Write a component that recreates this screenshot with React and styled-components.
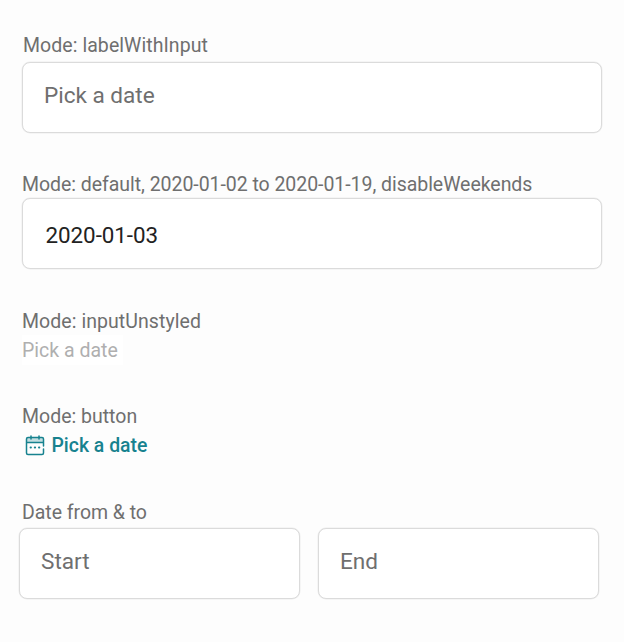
import React from "react";
import styled, { createGlobalStyle } from "styled-components";

const Global = createGlobalStyle`
  *{box-sizing:border-box}
  body{margin:0;background:#fdfdfd;font-family:Roboto,sans-serif;color:#6f6f6f}
`;
const Page = styled.main`
  width:624px;height:642px;padding:32px 22px 0;display:flex;flex-direction:column;overflow:hidden;
`;
const Section = styled.section`
  display:flex;flex-direction:column;flex:none;height:${p => p.$h}px;
`;
const Label = styled.label`
  height:${p => p.$h || 28}px;line-height:${p => p.$line || 30}px;font-size:19.5px;letter-spacing:${p => p.$ls || 0}px;white-space:nowrap;
  padding-left:${p => p.$indent || 0}px;
`;
const Field = styled.div`
  height:71px;width:${p => p.$w || 580}px;border:1px solid #dbdbdb;border-radius:8px;background:#fff;
  box-shadow:0 0 0 0.5px #ededed;
  padding:${p => (p.$filled ? "3px 0 0 22.5px" : "0 0 5px 21px")};display:flex;align-items:center;
  font-size:${p => (p.$filled ? 22.4 : 22.6)}px;letter-spacing:${p => p.$ls || 0}px;
  color:${p => (p.$filled ? "#222" : "#6f6f6f")};
`;
const PlainInput = styled.div`
  height:30px;line-height:32px;width:101px;background:#fff;color:#afafaf;font-size:19.5px;
`;
const PickButton = styled.button`
  border:0;background:none;padding:0 0 0 3px;height:30px;display:flex;align-items:center;gap:7px;
  font:500 19.4px Roboto,sans-serif;color:#17828f;
`;
const Range = styled.div`
  display:flex;gap:18px;margin-left:-3px;
`;

const CalendarIcon = () => (
  <svg width="19.500" height="21" viewBox="0 0 19.500 21" fill="none" stroke="currentColor" strokeWidth="1.5" strokeLinecap="round">
    <path d="M1.500 3h17v4h-17z" fill="currentColor" fillOpacity=".25" stroke="none" />
    <path d="M18.500 14v4q0 1.500-1.500 1.500H3Q1.500 19.500 1.500 18V4q0-1.500 1.500-1.500h14q1.500 0 1.500 1.500v7M1.500 7.500h17M6 1v3M14 1v3" />
    <path d="M5.600 12.500h.3M9.800 12.500h.3M14 12.500h.3" strokeWidth="2" />
  </svg>
);

export default function App() {
  return (
    <>
      <Global />
      <Page>
        <Section $h={138}>
          <Label $h={30} $line={28} $indent={1} $ls={0.06}>Mode: labelWithInput</Label>
          <Field $ls={-0.03}>Pick a date</Field>
        </Section>
        <Section $h={137}>
          <Label $ls={-0.045}>Mode: default, 2020-01-02 to 2020-01-19, disableWeekends</Label>
          <Field $filled $ls={-0.05}>2020-01-03</Field>
        </Section>
        <Section $h={95}>
          <Label $ls={0.06}>Mode: inputUnstyled</Label>
          <PlainInput>Pick a date</PlainInput>
        </Section>
        <Section $h={96}>
          <Label>Mode: button</Label>
          <PickButton><CalendarIcon />Pick a date</PickButton>
        </Section>
        <Section $h={110}>
          <Label $h={30} $ls={-0.04}>Date from &amp; to</Label>
          <Range><Field $w={281}>Start</Field><Field $w={281}>End</Field></Range>
        </Section>
      </Page>
    </>
  );
}
